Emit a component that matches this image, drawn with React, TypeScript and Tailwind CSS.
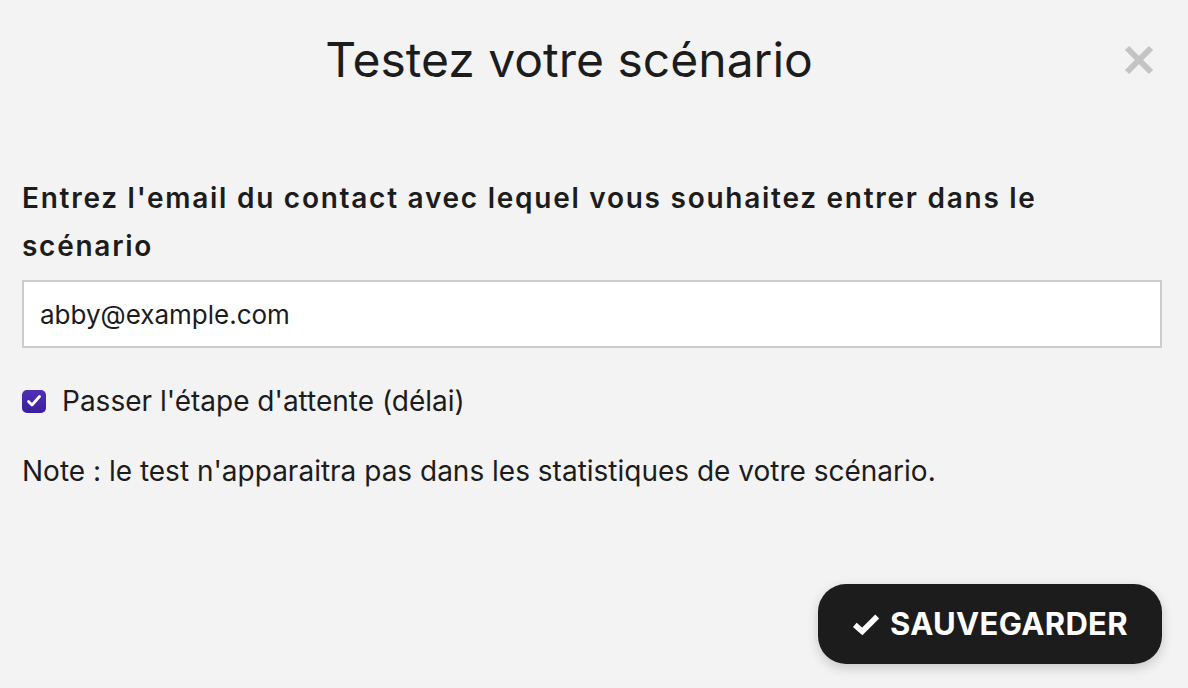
import React from "react";

export default function App() {
  return (
    <div
      className="w-[1188px] h-[688px] bg-[#f3f3f3] text-[#1f1f1f] overflow-hidden flex flex-col"
      style={{ fontFamily: "Inter, 'Noto Sans', sans-serif" }}
    >
      <div className="relative flex items-center justify-center h-[120px] pr-[50px]">
        <h1 className="text-[48px] leading-none font-normal text-[#1c1c1c]">Testez votre scénario</h1>
        <button className="absolute right-[32px] top-[43px] w-[34px] h-[34px] flex items-center justify-center">
          <svg width="32" height="32" viewBox="0 0 32 32">
            <path d="M4 4 L28 28 M28 4 L4 28" stroke="#c4c4c4" strokeWidth="6" strokeLinecap="butt" />
          </svg>
        </button>
      </div>
      <div className="px-[22px] pt-[54px] flex flex-col">
        <label className="text-[28px] leading-[48px] font-semibold tracking-[0.062em] text-[#1c1c1c] pr-[100px]">
          Entrez l'email du contact avec lequel vous souhaitez entrer dans le scénario
        </label>
        <div className="mt-[10px] h-[68px] w-[1140px] bg-white border-2 border-[#cccccc] flex items-center px-[16px]">
          <span className="text-[26px] text-[#1c1c1c]">abby@example.com</span>
        </div>
        <div className="mt-[32px] flex items-center gap-[16px]">
          <div className="w-[24px] h-[23px] rounded-[5px] bg-gradient-to-b from-[#5030b8] to-[#3a1f9c] flex items-center justify-center">
            <svg width="16" height="14" viewBox="0 0 16 14">
              <path d="M2.5 7.5 L6 11 L13.5 2.5" stroke="white" strokeWidth="2.8" fill="none" strokeLinecap="round" strokeLinejoin="round" />
            </svg>
          </div>
          <span className="text-[28px] text-[#1c1c1c]">Passer l'étape d'attente (délai)</span>
        </div>
        <p className="mt-[28px] text-[28px] text-[#1c1c1c]">
          Note : le test n'apparaitra pas dans les statistiques de votre scénario.
        </p>
      </div>
      <div className="flex-1" />
      <div className="flex justify-end pr-[26px] pb-[24px]">
        <button className="h-[80px] w-[344px] rounded-[28px] bg-[#1c1c1c] text-white flex items-center justify-center gap-[10px] shadow-[0_4px_12px_rgba(0,0,0,0.18)]">
          <svg width="28" height="24" viewBox="0 0 30 24">
            <path d="M3 13 L11 20 L27 4" stroke="white" strokeWidth="6" fill="none" strokeLinecap="butt" strokeLinejoin="miter" />
          </svg>
          <span className="text-[31px] font-bold tracking-[0.01em]">SAUVEGARDER</span>
        </button>
      </div>
    </div>
  );
}
